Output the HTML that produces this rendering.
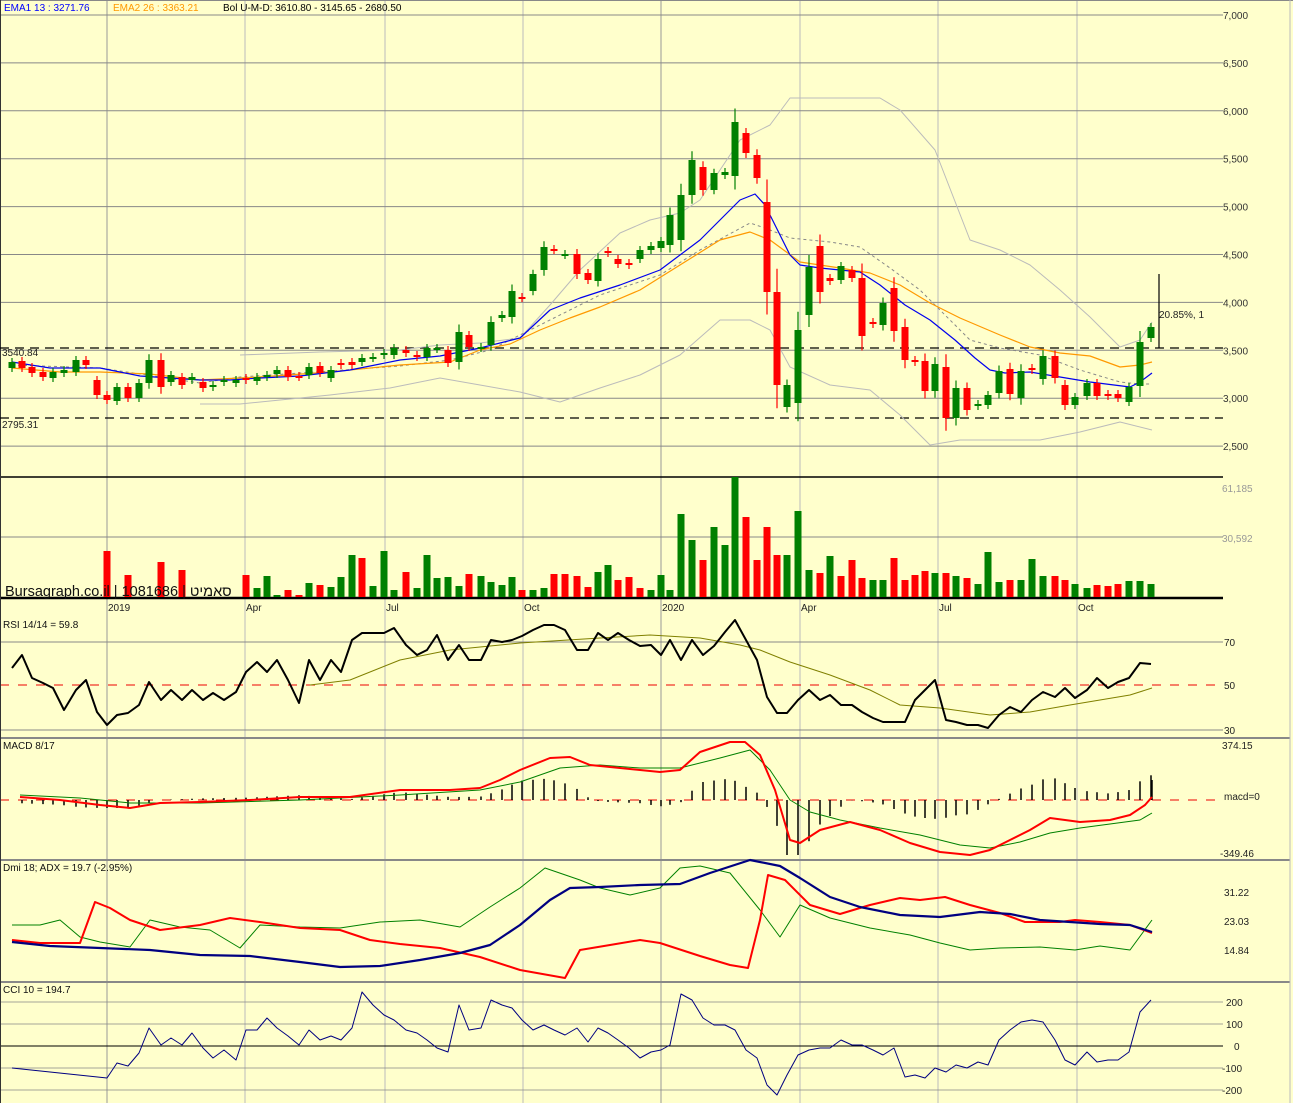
<!DOCTYPE html>
<html><head><meta charset="utf-8"><style>
html,body{margin:0;padding:0;background:#ffffcc;}
svg{display:block;font-family:"Liberation Sans","Noto Sans CJK JP",sans-serif;}
</style></head><body>
<svg id="s" width="1293" height="1103" xmlns="http://www.w3.org/2000/svg">
<rect width="1293" height="1103" fill="#ffffcc"/>
<g id="grid"></g>
<g id="main"></g>
<text x="4" y="11" font-size="10" fill="#0000ff">EMA1 13 : 3271.76</text>
<text x="113" y="11" font-size="10" fill="#ff9900">EMA2 26 : 3363.21</text>
<text x="223" y="11" font-size="10" fill="#000">Bol U-M-D: 3610.80 - 3145.65 - 2680.50</text>
<text x="2" y="356" font-size="10" fill="#222">3540.84</text>
<text x="2" y="428" font-size="10" fill="#222">2795.31</text>
<text x="1159" y="318" font-size="10" fill="#222">20.85%, 1</text>
<text x="5" y="596" font-size="14.5" fill="#111">Bursagraph.co.il | 1081686 | סאמיט</text>
<text x="3" y="628" font-size="10" fill="#111">RSI 14/14 = 59.8</text>
<text x="3" y="749" font-size="10" fill="#111">MACD 8/17</text>
<text x="3" y="871" font-size="10" fill="#111">Dmi 18; ADX = 19.7 (-2.95%)</text>
<text x="3" y="993" font-size="10" fill="#111">CCI 10 = 194.7</text>
</svg>
<script>
var NS="http://www.w3.org/2000/svg",G=document.getElementById('grid'),M=document.getElementById('main');
function el(p,t,a){var e=document.createElementNS(NS,t);for(var k in a)e.setAttribute(k,a[k]);p.appendChild(e);return e;}
function ln(p,x1,y1,x2,y2,c,w,d){var a={x1:x1,y1:y1,x2:x2,y2:y2,stroke:c,'stroke-width':w||1};if(d)a['stroke-dasharray']=d;el(p,'line',a);}
function tx(p,x,y,s,c,sz){var e=el(p,'text',{x:x,y:y,'font-size':sz||10,fill:c||'#222'});e.textContent=s;}
function pl(p,pts,c,w,d){var a={points:pts.map(function(q){return q.join(',')}).join(' '),fill:'none',stroke:c,'stroke-width':w||1,'stroke-linejoin':'round'};if(d)a['stroke-dasharray']=d;el(p,'polyline',a);}
var R=1223;
[107,245,385,523,661,800,938,1077].forEach(function(x,i){ln(G,x,0,x,1103,(x==107||x==661)?'#999':'#bbb',1);});
var pl_=["7,000","6,500","6,000","5,500","5,000","4,500","4,000","3,500","3,000","2,500"];
pl_.forEach(function(s,i){var y=15+i*47.9;ln(G,0,y,R,y,'#888',1);tx(G,1223,y+4,s,'#333');});
ln(G,0,0.5,1293,0.5,'#888',1);
ln(G,0,477,R,477,'#000',1.5);
ln(G,0,537,R,537,'#888',1);tx(G,1222,492,'61,185','#999');tx(G,1222,542,'30,592','#999');
ln(G,0,598,R,598,'#000',2.5);
[[107,'2019'],[245,'Apr'],[385,'Jul'],[523,'Oct'],[661,'2020'],[800,'Apr'],[938,'Jul'],[1077,'Oct']].forEach(function(d){tx(G,d[0]+1,611,d[1],'#222');});
ln(G,0,642,R,642,'#888');tx(G,1224,646,'70');ln(G,0,685,R,685,'#e00',1,'9,9');tx(G,1224,689,'50');ln(G,0,730,R,730,'#888');tx(G,1224,734,'30');
ln(G,0,738,1290,738,'#888',2);
tx(G,1222,749,'374.15');tx(G,1224,800,'macd=0');tx(G,1220,857,'-349.46');
ln(G,0,800,R,800,'#e00',1,'9,9');
ln(G,0,860,1290,860,'#888',2);
tx(G,1224,896,'31.22');tx(G,1224,925,'23.03');tx(G,1224,954,'14.84');
ln(G,0,982,1290,982,'#888',2);
[[200,1002],[100,1024],[0,1046],[-100,1068],[-200,1090]].forEach(function(c){tx(G,1226+(c[0]==0?8:0)-(c[0]<0?4:0),c[1]+4,String(c[0]));if(c[0]!=0)ln(G,0,c[1],R,c[1],'#888',0.8);});
ln(G,0,1046,R,1046,'#000',1);
ln(G,1290,0,1290,1103,'#bbb',1);ln(G,0.5,0,0.5,1103,'#333',1);
ln(M,0,348,R,348,'#000',1.3,'9,6');ln(M,0,418,R,418,'#000',1.3,'9,6');
pl(M,[[240,355],[320,352],[400,350],[440,345],[480,343],[520,338],[550,305],[580,270],[620,233],[650,220],[680,213],[700,200],[740,140],[770,125],[790,98],[880,98],[900,110],[935,150],[970,240],[1000,250],[1030,265],[1060,290],[1090,317],[1120,347],[1140,340],[1152,322]],'#bbb',1);
pl(M,[[200,404],[240,404],[330,395],[390,388],[440,378],[480,385],[520,392],[560,402],[600,388],[640,375],[680,355],[720,320],[750,320],[770,330],[790,367],[830,385],[870,390],[900,415],[930,445],[960,440],[990,440],[1040,440],[1080,432],[1120,422],[1152,430]],'#bbb',1);
pl(M,[[12,365],[100,368],[200,383],[240,377],[330,371],[400,366],[450,360],[490,350],[540,325],[600,295],[660,275],[700,250],[750,223],[765,228],[790,238],[830,242],[860,247],[890,268],[920,290],[945,315],[970,340],[1000,348],[1040,355],[1080,370],[1120,382],[1140,384],[1152,384]],'#888',1,'3,3');
pl(M,[[12,368],[60,372],[100,372],[150,374],[200,380],[260,377],[330,372],[400,365],[450,362],[480,350],[510,344],[540,330],[570,318],[600,307],[640,290],[680,265],[720,240],[750,232],[770,240],[800,262],[840,268],[870,273],[900,285],[930,303],[960,318],[1000,335],[1030,347],[1060,353],[1090,356],[1120,367],[1140,365],[1152,362]],'#ff9900',1.2);
pl(M,[[12,362],[50,368],[100,368],[140,376],[200,380],[230,380],[260,378],[300,376],[350,370],[400,360],[440,356],[480,348],[520,338],[550,310],[580,298],[620,285],[660,270],[700,240],[740,200],[755,194],[765,205],[790,255],[800,265],[820,268],[860,272],[880,285],[905,305],[930,320],[955,340],[975,358],[990,370],[1005,373],[1030,372],[1060,377],[1090,382],[1130,387],[1140,382],[1152,373]],'#0000ee',1.2);
var C="12,362,368,g;22,361,368,r;32,367,373,r;43,372,377,r;53,372,378,g;64,370,373,g;76,360,372,g;86,360,365,r;97,380,395,r;107,395,400,r;117,387,401,g;128,387,398,r;139,383,398,g;149,360,383,g;161,360,387,r;171,375,382,g;182,377,385,r;192,377,380,g;203,382,388,r;213,385,387,g;224,380,382,g;236,380,383,g;246,378,380,r;257,377,381,g;267,375,377,g;277,370,374,g;288,370,377,r;299,376,377,r;309,367,375,g;320,366,373,r;331,370,378,g;341,363,365,r;352,362,365,r;362,358,362,g;373,357,358,g;384,353,355,g;394,348,355,g;406,350,353,r;417,355,357,r;427,348,357,g;437,348,349,g;448,350,363,r;459,332,362,g;469,335,347,r;481,347,348,g;491,322,345,g;502,315,318,g;512,291,317,g;522,297,298,r;533,274,291,g;544,247,270,g;554,249,250,r;565,254,255,g;577,254,274,r;588,273,280,r;598,259,281,g;608,251,253,r;618,259,264,r;629,263,265,r;640,250,259,g;651,246,250,g;661,241,248,g;670,215,245,g;681,195,240,g;692,160,195,g;703,167,190,r;714,173,190,g;725,172,175,g;735,122,176,g;746,133,153,r;757,155,178,r;767,202,292,r;777,292,385,r;787,385,407,g;798,330,403,g;809,267,315,g;820,246,292,r;830,278,281,r;841,266,280,g;852,270,278,r;862,278,336,r;873,322,324,r;883,303,325,g;894,288,331,r;905,327,360,r;915,360,362,r;925,361,391,r;935,364,391,g;946,367,418,r;956,388,418,g;967,388,410,r;978,404,406,g;988,395,405,g;999,371,393,g;1010,369,394,r;1021,371,398,g;1032,368,370,r;1043,356,379,g;1055,356,378,r;1065,385,405,r;1075,397,405,g;1087,383,396,g;1097,383,396,r;1108,394,396,r;1118,394,398,r;1129,387,402,g;1140,342,386,g;1151,327,338,g";
C.split(';').forEach(function(s){var a=s.split(','),x=+a[0],t=+a[1],b=+a[2],c=a[3]=='g'?'#008000':'#ff0000';var ext=Math.max(4,(b-t)*0.25);ln(M,x,t-ext,x,b+ext,c,1.2);el(M,'rect',{x:x-3.5,y:t,width:7,height:Math.max(2,b-t),fill:c});});
ln(M,1159,274,1159,348,'#000',1.2);
var V="107,551,r;128,575,r;161,562,r;182,570,r;246,575,r;257,588,g;267,576,g;277,595,g;288,590,r;299,595,r;309,583,g;320,585,r;331,587,g;341,577,g;352,555,g;362,558,r;373,586,g;384,551,g;394,590,g;406,572,r;417,588,g;427,555,g;437,578,g;448,577,g;459,586,g;469,574,r;481,576,g;491,582,g;502,585,g;512,577,g;522,590,r;533,590,g;544,588,g;554,574,r;565,574,r;577,576,r;588,587,r;598,572,g;608,565,g;618,580,r;629,577,r;640,588,r;651,590,g;661,575,g;670,590,g;681,514,g;692,540,g;703,560,r;714,527,g;725,545,g;735,477,g;746,517,r;757,560,r;767,527,r;777,555,r;787,555,g;798,511,g;809,570,g;820,573,r;830,556,g;841,576,r;852,560,r;862,578,r;873,580,g;883,580,g;894,558,r;905,580,r;915,575,r;925,571,r;935,573,g;946,573,r;956,576,g;967,578,r;978,584,g;988,552,g;999,582,g;1010,580,r;1021,580,g;1032,559,g;1043,576,g;1055,576,r;1065,580,r;1075,584,g;1087,588,g;1097,585,r;1108,586,r;1118,584,r;1129,581,g;1140,581,g;1151,584,g";
V.split(';').forEach(function(s){var a=s.split(','),x=+a[0],t=+a[1],c=a[2]=='g'?'#008000':'#ff0000';el(M,'rect',{x:x-3.5,y:t,width:7,height:597-t,fill:c});});
pl(M,[[310,685],[350,680],[400,660],[450,650],[520,643],[600,638],[650,635],[700,638],[740,645],[760,650],[790,662],[830,675],[870,690],[900,705],[940,708],[990,715],[1030,712],[1070,705],[1100,700],[1130,695],[1152,688]],'#808000',1);
pl(M,[[12,668],[22,655],[32,678],[43,683],[53,688],[64,710],[76,690],[86,680],[97,712],[107,725],[117,715],[128,713],[139,705],[149,682],[161,700],[171,690],[182,700],[192,690],[203,700],[213,693],[224,700],[236,692],[246,672],[257,662],[267,672],[277,660],[288,680],[299,703],[309,660],[320,680],[331,660],[341,672],[352,640],[362,633],[373,633],[384,633],[394,628],[406,645],[417,655],[427,650],[437,635],[448,660],[459,645],[469,660],[481,660],[491,640],[502,642],[512,640],[522,636],[533,630],[544,625],[554,625],[565,630],[577,650],[588,650],[598,633],[608,640],[618,633],[629,640],[640,646],[651,645],[661,655],[670,640],[681,660],[692,640],[703,655],[714,646],[725,632],[735,620],[746,640],[757,660],[767,697],[777,713],[787,713],[798,700],[809,690],[820,700],[830,695],[841,705],[852,705],[862,712],[873,718],[883,722],[894,722],[905,722],[915,700],[925,690],[935,680],[946,720],[956,722],[967,725],[978,725],[988,728],[999,715],[1010,707],[1021,712],[1032,700],[1043,692],[1055,697],[1065,688],[1075,698],[1087,690],[1097,678],[1108,688],[1118,682],[1129,678],[1140,663],[1151,664]],'#000',2);
var mac=[[20,797],[60,800],[100,805],[130,808],[160,803],[200,802],[250,800],[300,797],[350,797],[400,790],[450,790],[480,788],[500,780],[520,770],[550,758],[570,757],[590,765],[620,768],[660,772],[680,770],[700,752],[730,742],[745,742],[760,755],[775,790],[790,840],[800,843],[820,830],[850,822],[880,830],[910,843],[940,852],[970,855],[990,850],[1010,840],[1030,830],[1050,818],[1080,822],[1110,820],[1130,815],[1145,805],[1152,797]];
var sig=[[20,795],[80,798],[130,803],[200,803],[300,800],[400,795],[480,790],[520,782],[560,768],[600,765],[640,768],[680,768],[720,758],[750,750],[770,770],[790,800],[810,812],[840,820],[880,828],[920,835],[960,845],[990,848],[1020,842],[1050,833],[1080,828],[1110,824],[1140,820],[1152,813]];
function ip(a,x){for(var i=1;i<a.length;i++){if(x<=a[i][0]){var p=a[i-1],q=a[i];return p[1]+(q[1]-p[1])*(x-p[0])/(q[0]-p[0]);}}return a[a.length-1][1];}
C.split(';').forEach(function(s){var x=+s.split(',')[0];if(x<20)return;var h=(ip(mac,x)-ip(sig,x))*1.6;if(h>55)h=55;ln(M,x,800,x,800+h,'#000',1.5);});
ln(M,1152,800,1152,780,'#000',1.5);
pl(M,sig,'#008000',1);pl(M,mac,'#ff0000',2);
pl(M,[[12,925],[40,925],[60,920],[80,937],[100,942],[130,947],[150,920],[180,927],[210,930],[240,948],[260,925],[300,927],[340,928],[380,922],[420,920],[460,927],[490,907],[520,888],[545,868],[580,880],[600,888],[630,895],[660,888],[680,868],[700,866],[730,873],[760,910],[780,937],[800,905],[830,918],[870,928],[910,935],[940,943],[970,950],[1000,948],[1040,947],[1075,950],[1100,946],[1130,950],[1152,920]],'#008000',1);
pl(M,[[12,940],[40,943],[80,943],[95,902],[110,908],[130,920],[160,930],[200,925],[230,918],[260,922],[300,928],[340,930],[370,940],[400,944],[440,948],[480,957],[520,970],[565,978],[580,950],[610,945],[640,940],[660,943],[700,956],[730,965],[748,968],[760,920],[768,875],[785,880],[810,905],[840,914],[870,905],[900,898],[920,900],[945,897],[970,905],[1000,913],[1025,922],[1060,922],[1075,920],[1100,922],[1130,925],[1152,933]],'#ff0000',2);
pl(M,[[12,942],[50,946],[100,948],[150,950],[200,955],[250,956],[300,962],[340,967],[380,966],[420,960],[460,953],[490,945],[520,925],[550,900],[570,888],[600,887],[640,885],[680,884],[710,873],[750,860],[780,866],[800,878],[830,897],[860,907],[900,915],[940,917],[980,912],[1010,914],[1040,920],[1070,922],[1100,924],[1130,925],[1152,932]],'#000080',2.2);
pl(M,[[12,1068],[107,1078],[117,1063],[128,1066],[139,1053],[149,1028],[161,1045],[171,1038],[182,1045],[192,1033],[203,1048],[213,1058],[224,1050],[236,1060],[246,1030],[257,1030],[267,1018],[277,1028],[288,1036],[299,1045],[309,1030],[320,1040],[331,1036],[341,1040],[352,1028],[362,992],[373,1005],[384,1015],[394,1020],[406,1030],[417,1033],[427,1040],[437,1048],[448,1052],[459,1005],[469,1030],[481,1028],[491,1000],[502,1005],[512,1008],[522,1020],[533,1030],[544,1025],[554,1030],[565,1035],[577,1028],[588,1042],[598,1028],[608,1033],[618,1040],[629,1048],[640,1058],[651,1052],[661,1050],[670,1045],[681,994],[692,1000],[703,1018],[714,1025],[725,1025],[735,1030],[746,1050],[757,1058],[767,1085],[777,1095],[787,1075],[798,1055],[809,1050],[820,1048],[830,1048],[841,1040],[852,1045],[862,1045],[873,1050],[883,1055],[894,1048],[905,1077],[915,1075],[925,1078],[935,1068],[946,1072],[956,1065],[967,1068],[978,1062],[988,1065],[999,1040],[1010,1030],[1021,1022],[1032,1020],[1043,1022],[1055,1040],[1065,1060],[1075,1065],[1087,1052],[1097,1062],[1108,1060],[1118,1060],[1129,1052],[1140,1012],[1151,1000]],'#000080',1);
</script>
</body></html>
